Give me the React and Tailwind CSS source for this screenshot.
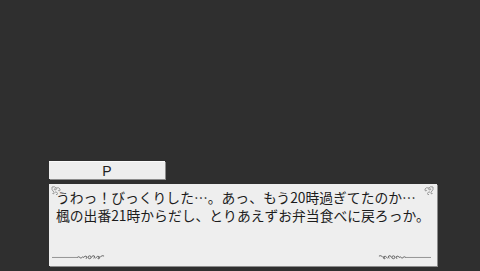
const jp = { fontFamily: '"Noto Sans CJK JP", "Noto Sans", sans-serif' };

function Curl({ className, flip }) {
  return (
    <svg viewBox="0 0 10 10" className={className} style={flip ? { transform: 'scaleX(-1)' } : undefined}>
      <g fill="none" stroke="#8f8f8f" strokeWidth="0.9">
        <path d="M1 1 Q4 0 5 2 Q6 4 4 4 Q2.5 3.5 3.5 2.5" />
        <path d="M5 2 Q8 1 9 3 Q9.5 5 8 5 Q7 4.5 7.5 4" />
        <path d="M1 1 Q0.5 4 2 5 Q3.5 6 3 7.5 Q2 8.5 1.5 7" />
        <path d="M4 6 Q6 5.5 6.5 7.5 Q6.5 9 5 8.5" />
      </g>
    </svg>
  );
}

function Flourish({ className, flip }) {
  return (
    <svg viewBox="0 0 56 6" className={className} style={flip ? { transform: 'scaleX(-1)' } : undefined}>
      <g fill="none" stroke="#555" strokeWidth="0.9">
        <path d="M0 3.5 L26 3.5" stroke="#7a7a7a" strokeWidth="0.8" />
        <path d="M26 3.5 Q28 2 29 3.5 Q30 5 31 3.5 Q32 2 33 3.5" />
        <path d="M33 3.5 Q34 1 36 2.5 Q37 4.5 35 4.5" />
        <circle cx="39" cy="3.3" r="1.5" />
        <path d="M41 3.5 Q42 0.5 44 2 Q45 4 43 4.2" />
        <path d="M45 4.5 Q47 1 49 2.5 Q50 5 48 5 Q47 4 48.5 3.5" />
        <path d="M50 3 Q52 0.8 54 2" />
      </g>
    </svg>
  );
}

export default function App() {
  return (
    <div className="w-[480px] h-[271px] bg-[#2f2f2f] flex flex-col justify-end pl-[49px] pb-[5px] overflow-hidden" style={jp}>
      <div className="w-[116px] h-[18px] bg-[#eeeeee] border-t border-[#fafafa] shadow-[1px_1px_0_#8c8c8c] flex items-center justify-center">
        <span className="text-[14px] leading-none text-[#222]" style={{ fontFamily: '"Liberation Sans", sans-serif' }}>P</span>
      </div>
      <div className="relative mt-[5px] w-[388px] h-[82px] bg-[#eeeeee] shadow-[1px_1px_0_#8c8c8c] pl-[7px] pt-[4px]">
        <Curl className="absolute left-[2px] top-[2px] w-[10px] h-[10px]" />
        <Curl className="absolute right-[3px] top-[2px] w-[10px] h-[10px]" flip />
        <Flourish className="absolute left-[3px] bottom-[6px] w-[54px] h-[6px]" />
        <Flourish className="absolute right-[6px] bottom-[6px] w-[54px] h-[6px]" flip />
        <p className="text-[13.8px] leading-[18px] text-[#1c1c1c] whitespace-nowrap">
          うわっ！びっくりした…。あっ、もう20時過ぎてたのか…
          <br />
          楓の出番21時からだし、とりあえずお弁当食べに戻ろっか。
        </p>
      </div>
    </div>
  );
}
